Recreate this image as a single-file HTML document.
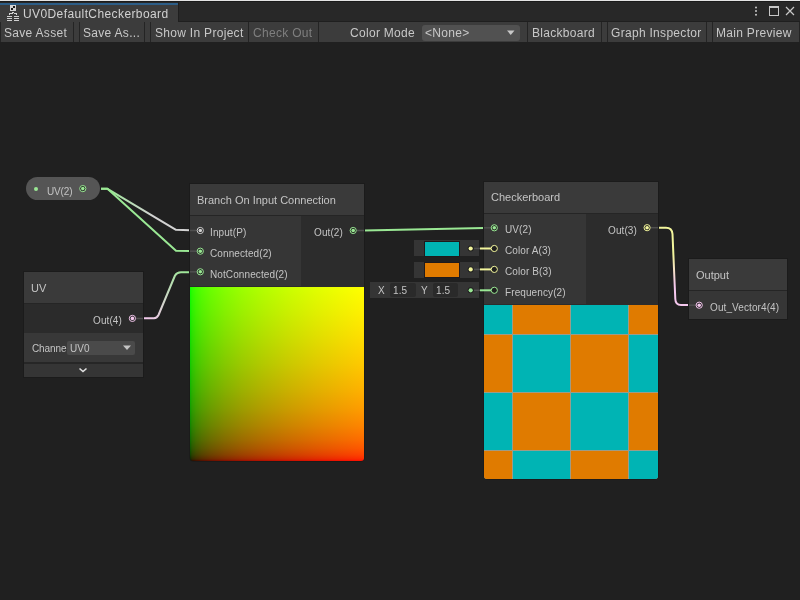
<!DOCTYPE html>
<html><head><meta charset="utf-8">
<style>
*{margin:0;padding:0;box-sizing:border-box}
html,body{width:800px;height:600px;overflow:hidden;background:#202020;font-family:"Liberation Sans",sans-serif}
.a{position:absolute}
.t{position:absolute;white-space:nowrap;line-height:1;will-change:transform}
.f12{font-size:12px;letter-spacing:0.3px;color:#c8c8c8}
.f11{font-size:11px;color:#c4c4c4}
.f10{font-size:10px;letter-spacing:0.1px;color:#c4c4c4}
.sep{position:absolute;top:22px;width:1px;height:20px;background:#242424}
svg{position:absolute;left:0;top:0}
</style></head><body>
<div class="a" style="left:0;top:0;width:800px;height:1px;background:#e4e4e4"></div>
<div class="a" style="left:0;top:1px;width:800px;height:21px;background:#282828"></div>
<div class="a" style="left:0;top:1px;width:800px;height:1px;background:#1b1b1b"></div>
<div class="a" style="left:0;top:3px;width:178px;height:19px;background:#3c3c3c"></div>
<div class="a" style="left:0;top:3px;width:178px;height:2px;background:#2c5d87"></div>
<div class="a" style="left:178px;top:2px;width:1px;height:20px;background:#1f1f1f"></div>
<div class="a" style="left:178px;top:21px;width:622px;height:1px;background:#1f1f1f"></div>
<div class="t f12" style="left:23px;top:8px;color:#d2d2d2;letter-spacing:0.4px">UV0DefaultCheckerboard</div>
<svg width="800" height="24" style="left:0;top:0">
<g shape-rendering="crispEdges" fill="#d4d4d4"><rect x="10" y="5" width="6" height="6"/>
<rect x="13" y="6" width="2" height="2" fill="#1a1a1a"/><rect x="11" y="8" width="2" height="2" fill="#1a1a1a"/>
<rect x="9" y="13" width="1" height="2"/><rect x="9" y="13" width="3" height="1"/><rect x="12" y="12" width="1" height="2"/><rect x="12" y="12" width="1.5" height="1"/>
<rect x="14" y="13" width="3" height="1"/><rect x="16" y="13" width="1" height="2"/></g>
<path d="M7 16.5h5M7 18.5h5M7 20.5h5M14 16.5h5M14 18.5h5M14 20.5h5" stroke="#d0d0d0" stroke-width="1"/>
<circle cx="756" cy="7.5" r="1" fill="#c8c8c8"/><circle cx="756" cy="11" r="1" fill="#c8c8c8"/><circle cx="756" cy="14.8" r="1" fill="#c8c8c8"/>
<rect x="769.5" y="6.5" width="9" height="9" fill="none" stroke="#c8c8c8" stroke-width="1"/>
<rect x="769.5" y="6.5" width="9" height="1.5" fill="#c8c8c8"/>
<path d="M786 7L794 15M794 7L786 15" stroke="#c8c8c8" stroke-width="1.2"/>
</svg>
<div class="a" style="left:0;top:22px;width:800px;height:20px;background:#3c3c3c"></div>
<div class="sep" style="left:0px"></div>
<div class="sep" style="left:73px"></div>
<div class="sep" style="left:79px"></div>
<div class="sep" style="left:144px"></div>
<div class="sep" style="left:150px"></div>
<div class="sep" style="left:248px"></div>
<div class="sep" style="left:318px"></div>
<div class="sep" style="left:527px"></div>
<div class="sep" style="left:601px"></div>
<div class="sep" style="left:607px"></div>
<div class="sep" style="left:706px"></div>
<div class="sep" style="left:712px"></div>
<div class="sep" style="left:799px"></div>
<div class="t f12" style="left:4px;top:27px">Save Asset</div>
<div class="t f12" style="left:83px;top:27px">Save As...</div>
<div class="t f12" style="left:155px;top:27px">Show In Project</div>
<div class="t f12" style="left:253px;top:27px;color:#7f7f7f">Check Out</div>
<div class="t f12" style="left:350px;top:27px">Color Mode</div>
<div class="t f12" style="left:532px;top:27px">Blackboard</div>
<div class="t f12" style="left:611px;top:27px">Graph Inspector</div>
<div class="t f12" style="left:716px;top:27px">Main Preview</div>
<div class="a" style="left:422px;top:25px;width:98px;height:16px;background:#515151;border-radius:3px"></div>
<div class="t f12" style="left:425px;top:27px">&lt;None&gt;</div>
<svg width="800" height="50"><path d="M507 30.5h7.5l-3.75 4.5z" fill="#c8c8c8"/></svg>
<svg width="800" height="600">
<defs>
<linearGradient id="e1" gradientUnits="userSpaceOnUse" x1="100" y1="188" x2="190" y2="230"><stop offset="0.05" stop-color="#9ae894"/><stop offset="0.6" stop-color="#d2d2d2"/></linearGradient>
<linearGradient id="e3" gradientUnits="userSpaceOnUse" x1="143" y1="318" x2="190" y2="272"><stop offset="0" stop-color="#f5c8ee"/><stop offset="1" stop-color="#9ae894"/></linearGradient>
<linearGradient id="e5" gradientUnits="userSpaceOnUse" x1="0" y1="228" x2="0" y2="305"><stop offset="0.35" stop-color="#f2f59c"/><stop offset="0.75" stop-color="#f5c8ee"/></linearGradient>
</defs>
<g fill="none" stroke-width="2" stroke-linejoin="round" stroke-linecap="butt">
<path d="M101 188.8 L107.5 188.8 L176 229.8 L190 230.3" stroke="url(#e1)"/>
<path d="M101 188.8 L107.5 188.8 L176 250.8 L190 251" stroke="#9ae894"/>
<path d="M143 318.3 L154 318.3 Q157 318 158.5 315 L175 275.5 Q177 272.3 181 272.3 L190 272.3" stroke="url(#e3)"/>
<path d="M364 230.5 L484 228" stroke="#9ae894"/>
<path d="M658 227.7 L666 227.7 Q672 227.7 672.5 234 L675.3 299 Q675.5 305 681 305 L689 305" stroke="url(#e5)"/>
</g></svg>
<div class="a" style="left:26px;top:177px;width:74px;height:23px;background:#555555;border-radius:12px"></div>
<div class="a" style="left:34px;top:187px;width:4px;height:4px;background:#9ae894;border-radius:50%"></div>
<div class="t f10" style="left:46.5px;top:187px;letter-spacing:-0.15px">UV(2)</div>
<div class="a" style="left:24px;top:272px;width:119px;height:105px;background:#2b2b2b;box-shadow:0 0 0 1px #1b1b1b"></div>
<div class="a" style="left:24px;top:272px;width:119px;height:31px;background:#3a3a3a"></div>
<div class="a" style="left:24px;top:303px;width:119px;height:1px;background:#252525"></div>
<div class="a" style="left:24px;top:333px;width:119px;height:29px;background:#383838"></div>
<div class="a" style="left:24px;top:362px;width:119px;height:2px;background:#262626"></div>
<div class="a" style="left:24px;top:364px;width:119px;height:13px;background:#353535"></div>
<div class="t f11" style="left:30.5px;top:283px">UV</div>
<div class="t f10" style="left:93px;top:316px">Out(4)</div>
<div class="t f10" style="left:32px;top:344px;letter-spacing:-0.1px">Channe</div>
<div class="a" style="left:67px;top:341px;width:68px;height:14px;background:#4a4a4a;border-radius:2px"></div>
<div class="t f10" style="left:70px;top:344px">UV0</div>
<svg width="800" height="600"><path d="M123 345.5h8l-4 4.5z" fill="#c4c4c4"/><path d="M79.5 368.5l3.5 3l3.5-3" stroke="#e0e0e0" stroke-width="1.6" fill="none"/></svg>
<div class="a" style="left:190px;top:184px;width:174px;height:277px;background:#2c2c2c;box-shadow:0 0 0 1px #1b1b1b;border-radius:0 0 4px 4px"></div>
<div class="a" style="left:190px;top:184px;width:174px;height:31px;background:#3a3a3a"></div>
<div class="a" style="left:190px;top:215px;width:174px;height:1px;background:#252525"></div>
<div class="a" style="left:190px;top:216px;width:111px;height:70px;background:#363636"></div>
<div class="t f11" style="left:197px;top:195px">Branch On Input Connection</div>
<div class="t f10" style="left:210px;top:228px">Input(P)</div>
<div class="t f10" style="left:210px;top:249px">Connected(2)</div>
<div class="t f10" style="left:210px;top:270px">NotConnected(2)</div>
<div class="t f10" style="left:314px;top:228px">Out(2)</div>
<div class="a" style="left:190px;top:287px;width:174px;height:174px;border-radius:0 0 3px 3px;background:linear-gradient(to right, rgb(0,0,0) 0.0%, rgb(27,0,0) 0.4%, rgb(46,0,0) 1.5%, rgb(65,0,0) 3.5%, rgb(86,0,0) 7.0%, rgb(107,0,0) 12.0%, rgb(132,0,0) 20.0%, rgb(156,0,0) 30.0%, rgb(179,0,0) 42.0%, rgb(201,0,0) 56.0%, rgb(223,0,0) 72.0%, rgb(240,0,0) 86.0%, rgb(255,0,0) 100.0%), linear-gradient(to top, rgb(0,0,0) 0.0%, rgb(0,27,0) 0.4%, rgb(0,46,0) 1.5%, rgb(0,65,0) 3.5%, rgb(0,86,0) 7.0%, rgb(0,107,0) 12.0%, rgb(0,132,0) 20.0%, rgb(0,156,0) 30.0%, rgb(0,179,0) 42.0%, rgb(0,201,0) 56.0%, rgb(0,223,0) 72.0%, rgb(0,240,0) 86.0%, rgb(0,255,0) 100.0%);background-blend-mode:screen"></div>
<div class="a" style="left:484px;top:182px;width:174px;height:297px;background:#2c2c2c;box-shadow:0 0 0 1px #1b1b1b;border-radius:0 0 4px 4px"></div>
<div class="a" style="left:484px;top:182px;width:174px;height:31px;background:#3a3a3a"></div>
<div class="a" style="left:484px;top:213px;width:174px;height:1px;background:#252525"></div>
<div class="a" style="left:484px;top:214px;width:102px;height:90px;background:#363636"></div>
<div class="t f11" style="left:491px;top:192px">Checkerboard</div>
<div class="t f10" style="left:505px;top:225px">UV(2)</div>
<div class="t f10" style="left:505px;top:246px">Color A(3)</div>
<div class="t f10" style="left:505px;top:267px">Color B(3)</div>
<div class="t f10" style="left:505px;top:288px">Frequency(2)</div>
<div class="t f10" style="left:607.5px;top:225.5px">Out(3)</div>
<div class="a" style="left:484px;top:305px;width:174px;height:174px;border-radius:0 0 3px 3px;overflow:hidden;background:#9c9c88">
<div class="a" style="left:0px;top:0px;width:28px;height:29px;background:#00b4b4"></div>
<div class="a" style="left:29px;top:0px;width:57px;height:29px;background:#e07b00"></div>
<div class="a" style="left:87px;top:0px;width:57px;height:29px;background:#00b4b4"></div>
<div class="a" style="left:145px;top:0px;width:29px;height:29px;background:#e07b00"></div>
<div class="a" style="left:0px;top:30px;width:28px;height:57px;background:#e07b00"></div>
<div class="a" style="left:29px;top:30px;width:57px;height:57px;background:#00b4b4"></div>
<div class="a" style="left:87px;top:30px;width:57px;height:57px;background:#e07b00"></div>
<div class="a" style="left:145px;top:30px;width:29px;height:57px;background:#00b4b4"></div>
<div class="a" style="left:0px;top:88px;width:28px;height:57px;background:#00b4b4"></div>
<div class="a" style="left:29px;top:88px;width:57px;height:57px;background:#e07b00"></div>
<div class="a" style="left:87px;top:88px;width:57px;height:57px;background:#00b4b4"></div>
<div class="a" style="left:145px;top:88px;width:29px;height:57px;background:#e07b00"></div>
<div class="a" style="left:0px;top:146px;width:28px;height:28px;background:#e07b00"></div>
<div class="a" style="left:29px;top:146px;width:57px;height:28px;background:#00b4b4"></div>
<div class="a" style="left:87px;top:146px;width:57px;height:28px;background:#e07b00"></div>
<div class="a" style="left:145px;top:146px;width:29px;height:28px;background:#00b4b4"></div>
</div>
<div class="a" style="left:414px;top:240px;width:65px;height:16px;background:#353535"></div>
<div class="a" style="left:424px;top:241px;width:36px;height:16px;background:#1f1a1c"></div>
<div class="a" style="left:425px;top:242px;width:34px;height:14px;background:#00b4b4"></div>
<div class="a" style="left:414px;top:262px;width:65px;height:16px;background:#353535"></div>
<div class="a" style="left:424px;top:262px;width:36px;height:16px;background:#1f1a1c"></div>
<div class="a" style="left:425px;top:263px;width:34px;height:14px;background:#e07b00"></div>
<div class="a" style="left:370px;top:282px;width:109px;height:16px;background:#353535"></div>
<div class="a" style="left:390px;top:283px;width:26px;height:14px;background:#2a2a2a;border-radius:2px"></div>
<div class="a" style="left:433px;top:283px;width:25px;height:14px;background:#2a2a2a;border-radius:2px"></div>
<div class="t f10" style="left:378px;top:286px">X</div>
<div class="t f10" style="left:393px;top:286px">1.5</div>
<div class="t f10" style="left:420.5px;top:286px">Y</div>
<div class="t f10" style="left:435.5px;top:286px">1.5</div>
<div class="a" style="left:689px;top:259px;width:98px;height:60px;background:#363636;box-shadow:0 0 0 1px #1b1b1b"></div>
<div class="a" style="left:689px;top:259px;width:98px;height:31px;background:#3a3a3a"></div>
<div class="a" style="left:689px;top:290px;width:98px;height:1px;background:#252525"></div>
<div class="t f11" style="left:696px;top:270px">Output</div>
<div class="t f10" style="left:710px;top:303px">Out_Vector4(4)</div>
<svg width="800" height="600"><circle cx="82.8" cy="188.6" r="3.1" fill="#1e1e1e" stroke="#9ae894" stroke-width="1"/><circle cx="82.8" cy="188.6" r="1.8" fill="#9ae894"/><path d="M136 318.5H143" stroke="#505050" stroke-width="1.5"/><circle cx="132.4" cy="318.4" r="3.1" fill="#1e1e1e" stroke="#f5c8ee" stroke-width="1"/><circle cx="132.4" cy="318.4" r="1.8" fill="#f5c8ee"/><path d="M190 230.5H197" stroke="#505050" stroke-width="1.5"/><circle cx="200.3" cy="230.5" r="3.1" fill="#1e1e1e" stroke="#d2d2d2" stroke-width="1"/><circle cx="200.3" cy="230.5" r="1.8" fill="#d2d2d2"/><path d="M190 251.2H197" stroke="#505050" stroke-width="1.5"/><circle cx="200.3" cy="251.2" r="3.1" fill="#1e1e1e" stroke="#9ae894" stroke-width="1"/><circle cx="200.3" cy="251.2" r="1.8" fill="#9ae894"/><path d="M190 271.8H197" stroke="#505050" stroke-width="1.5"/><circle cx="200.3" cy="271.8" r="3.1" fill="#1e1e1e" stroke="#9ae894" stroke-width="1"/><circle cx="200.3" cy="271.8" r="1.8" fill="#9ae894"/><path d="M357 230.5H364" stroke="#505050" stroke-width="1.5"/><circle cx="353.2" cy="230.5" r="3.1" fill="#1e1e1e" stroke="#9ae894" stroke-width="1"/><circle cx="353.2" cy="230.5" r="1.8" fill="#9ae894"/><path d="M484 227.8H491" stroke="#505050" stroke-width="1.5"/><circle cx="494.3" cy="227.8" r="3.1" fill="#1e1e1e" stroke="#9ae894" stroke-width="1"/><circle cx="494.3" cy="227.8" r="1.8" fill="#9ae894"/><path d="M474 248.5H480" stroke="#505050" stroke-width="1.5"/><path d="M480 248.5H491" stroke="#f2f59c" stroke-width="2"/><circle cx="494.3" cy="248.5" r="3.1" fill="#1e1e1e" stroke="#f2f59c" stroke-width="1"/><circle cx="470.7" cy="248.5" r="3" fill="#1e1e1e"/><circle cx="470.7" cy="248.5" r="2.1" fill="#f2f59c"/><path d="M474 269.4H480" stroke="#505050" stroke-width="1.5"/><path d="M480 269.4H491" stroke="#f2f59c" stroke-width="2"/><circle cx="494.3" cy="269.4" r="3.1" fill="#1e1e1e" stroke="#f2f59c" stroke-width="1"/><circle cx="470.7" cy="269.4" r="3" fill="#1e1e1e"/><circle cx="470.7" cy="269.4" r="2.1" fill="#f2f59c"/><path d="M474 290.3H480" stroke="#505050" stroke-width="1.5"/><path d="M480 290.3H491" stroke="#9ae894" stroke-width="2"/><circle cx="494.3" cy="290.3" r="3.1" fill="#1e1e1e" stroke="#9ae894" stroke-width="1"/><circle cx="470.7" cy="290.3" r="3" fill="#1e1e1e"/><circle cx="470.7" cy="290.3" r="2.1" fill="#9ae894"/><path d="M651 227.7H658" stroke="#505050" stroke-width="1.5"/><circle cx="647.1" cy="227.7" r="3.1" fill="#1e1e1e" stroke="#f2f59c" stroke-width="1"/><circle cx="647.1" cy="227.7" r="1.8" fill="#f2f59c"/><path d="M689 305.2H696" stroke="#505050" stroke-width="1.5"/><circle cx="699.2" cy="305.2" r="3.1" fill="#1e1e1e" stroke="#f5c8ee" stroke-width="1"/><circle cx="699.2" cy="305.2" r="1.8" fill="#f5c8ee"/></svg>
</body></html>
